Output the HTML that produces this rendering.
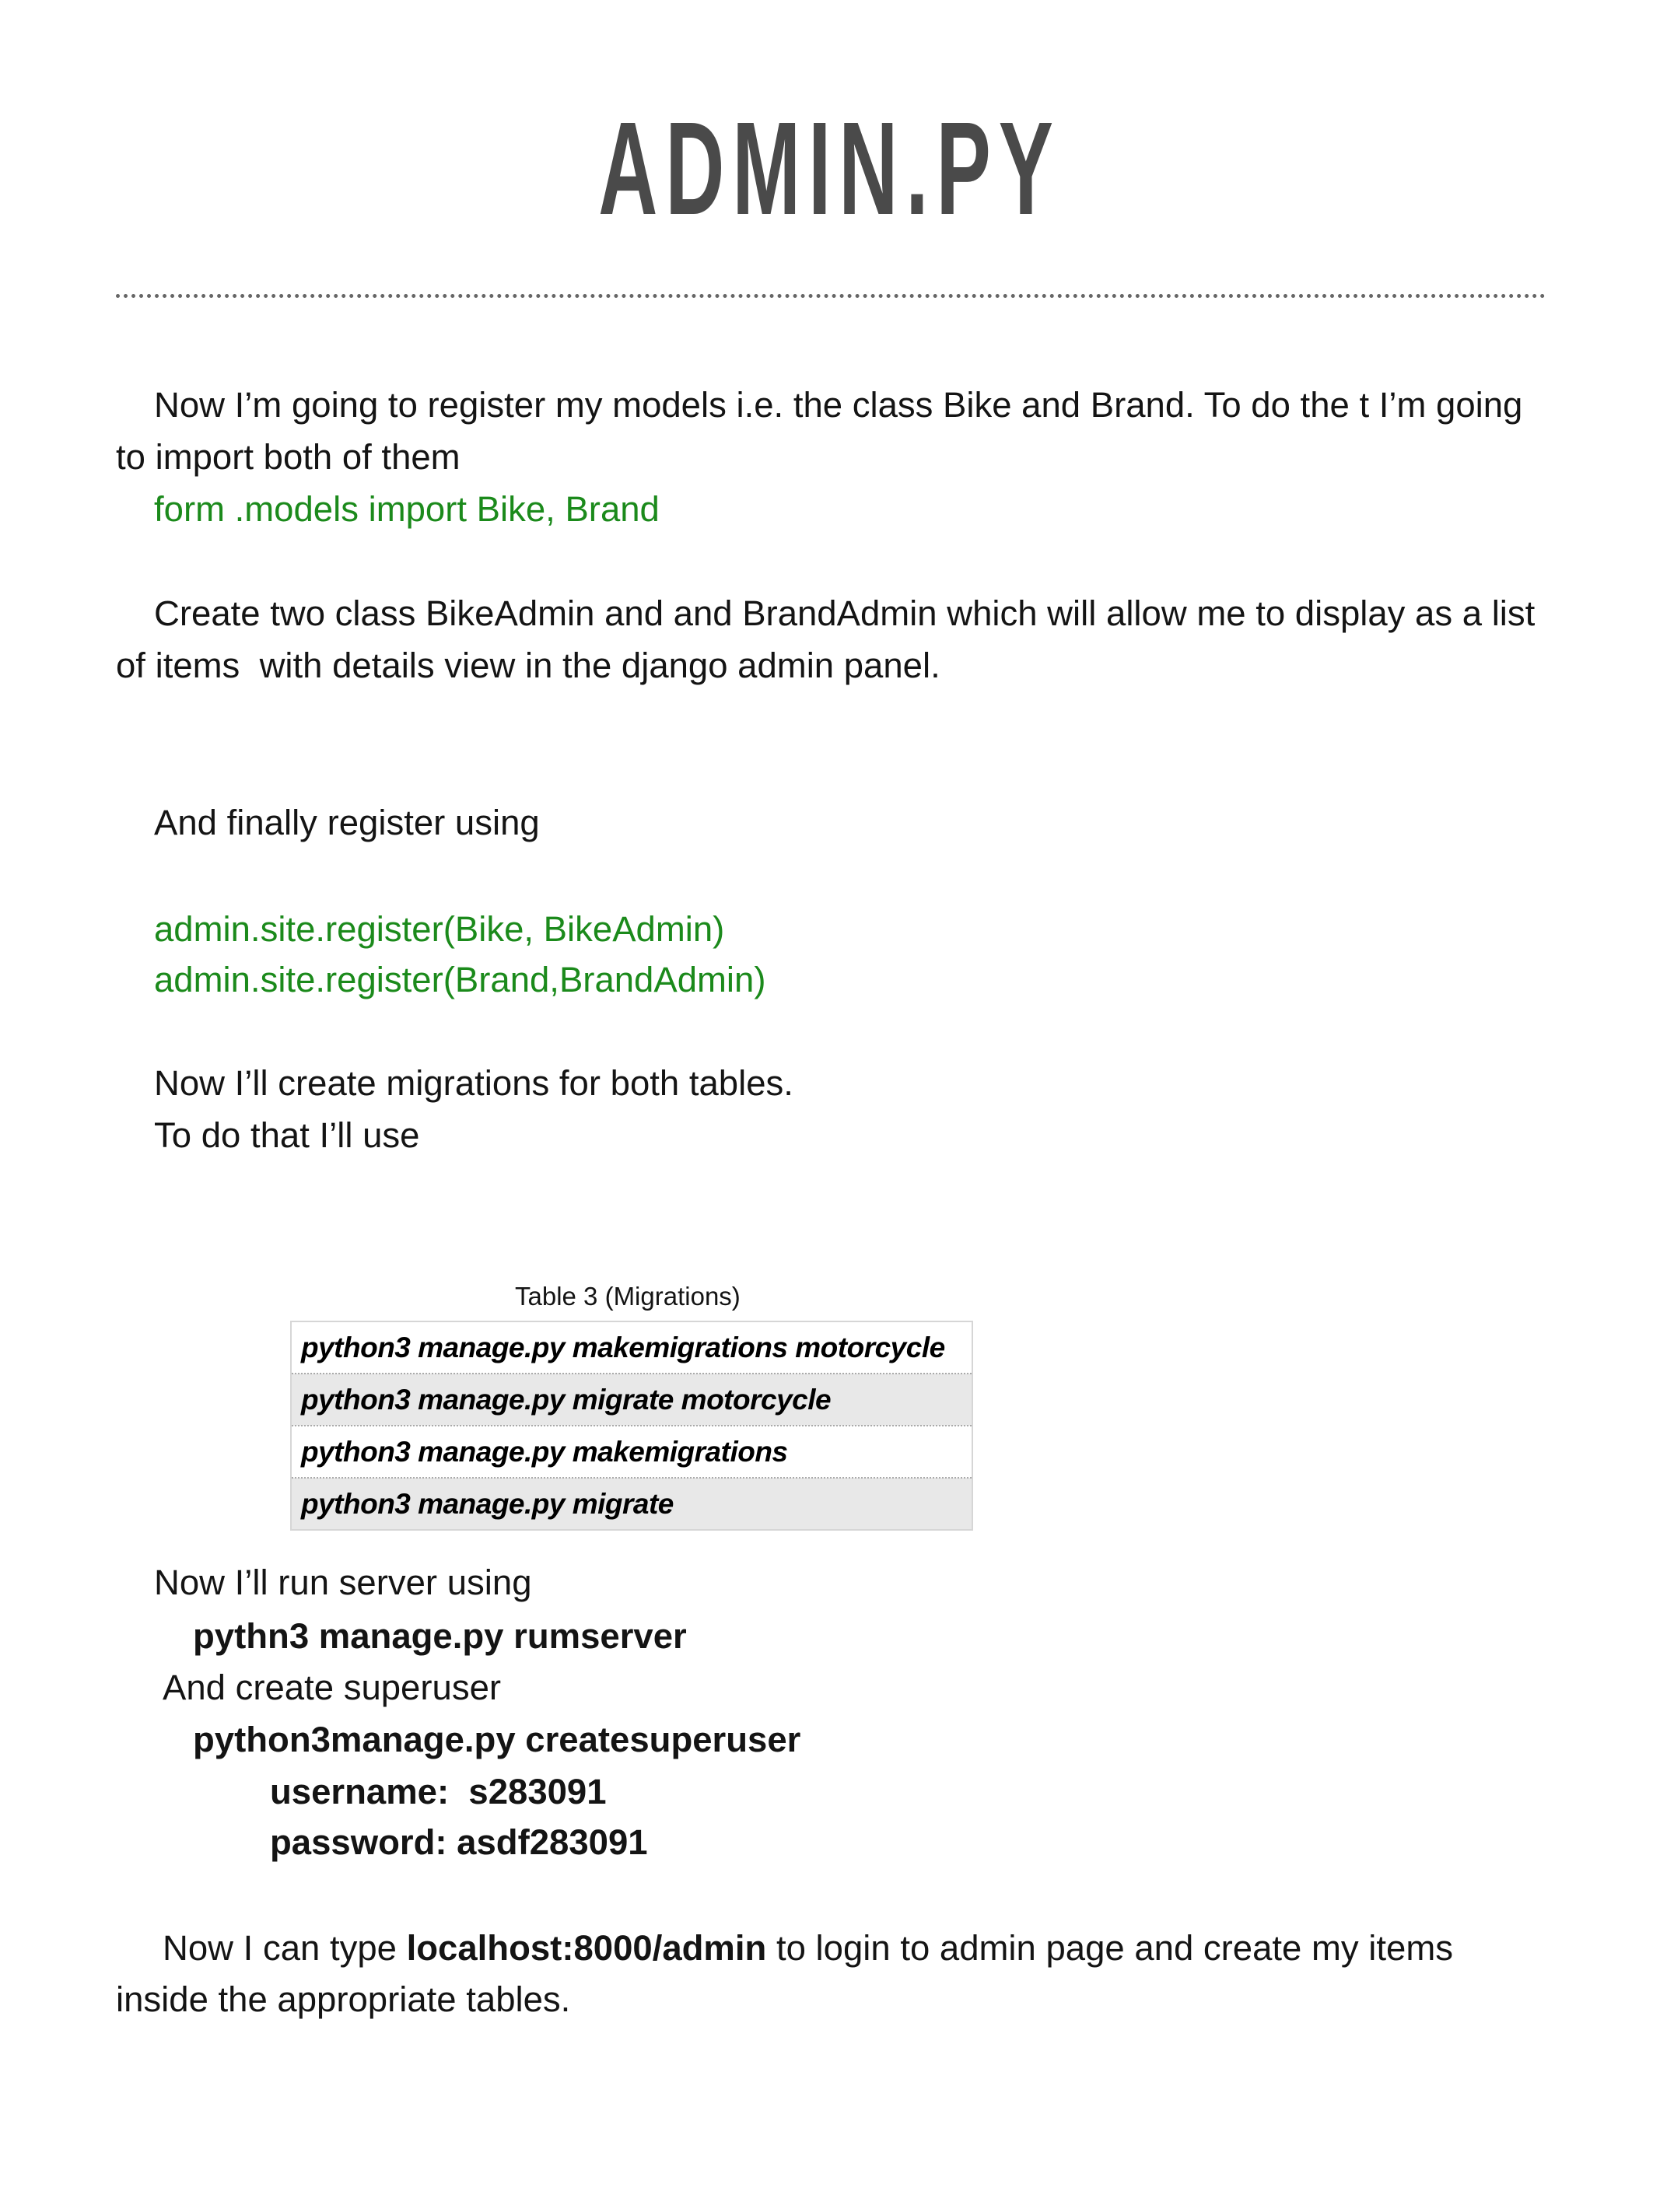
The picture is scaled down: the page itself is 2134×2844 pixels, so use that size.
<!DOCTYPE html>
<html><head><meta charset="utf-8"><style>
html,body{margin:0;padding:0;background:#fff;}
body{width:2134px;height:2844px;position:relative;overflow:hidden;font-family:"Liberation Sans",sans-serif;color:#141414;}
.l{position:absolute;white-space:nowrap;font-size:45.5px;line-height:66px;height:66px;}
.g{color:#1b8a1b;}
.b{font-weight:bold;}
.title{position:absolute;left:0;width:2134px;top:122px;text-align:center;}
.title span{display:inline-block;font-weight:bold;font-size:170px;line-height:190px;color:#4a4a4a;letter-spacing:16px;transform:scaleX(0.62);transform-origin:center;}
.dots{position:absolute;left:149px;width:1838px;top:378px;height:0;border-top:5px dotted #666;}
table{position:absolute;left:373px;top:1698px;width:878px;border-collapse:collapse;border:2px solid #d6d6d6;}
td{height:65px;padding:0 0 0 12px;font-weight:bold;font-style:italic;font-size:37px;color:#000;letter-spacing:-0.5px;}
tr+tr td{border-top:2px dotted #aaa;}
tr.s td{background:#e8e8e8;}
</style></head><body>
<div class="title"><span>ADMIN.PY</span></div>
<div class="dots"></div>
<div class="l" style="left:198px;top:488px">Now I’m going to register my models i.e. the class Bike and Brand. To do the t I’m going</div>
<div class="l" style="left:149px;top:555px">to import both of them</div>
<div class="l g" style="left:198px;top:622px">form .models import Bike, Brand</div>
<div class="l" style="left:198px;top:756px">Create two class BikeAdmin and and BrandAdmin which will allow me to display as a list</div>
<div class="l" style="left:149px;top:823px">of items&nbsp; with details view in the django admin panel.</div>
<div class="l" style="left:198px;top:1025px">And finally register using</div>
<div class="l g" style="left:198px;top:1162px">admin.site.register(Bike, BikeAdmin)</div>
<div class="l g" style="left:198px;top:1227px">admin.site.register(Brand,BrandAdmin)</div>
<div class="l" style="left:198px;top:1360px">Now I’ll create migrations for both tables.</div>
<div class="l" style="left:198px;top:1427px">To do that I’ll use</div>
<div class="l" style="left:662px;top:1634px;font-size:33px">Table 3 (Migrations)</div>
<table>
<tr><td>python3 manage.py makemigrations motorcycle</td></tr>
<tr class="s"><td>python3 manage.py migrate motorcycle</td></tr>
<tr><td>python3 manage.py makemigrations</td></tr>
<tr class="s"><td>python3 manage.py migrate</td></tr>
</table>
<div class="l" style="left:198px;top:2002px">Now I’ll run server using</div>
<div class="l b" style="left:248px;top:2071px">pythn3 manage.py rumserver</div>
<div class="l" style="left:209px;top:2137px">And create superuser</div>
<div class="l b" style="left:248px;top:2204px">python3manage.py createsuperuser</div>
<div class="l b" style="left:347px;top:2271px">username:&nbsp; s283091</div>
<div class="l b" style="left:347px;top:2336px">password: asdf283091</div>
<div class="l" style="left:209px;top:2472px">Now I can type <b>localhost:8000/admin</b> to login to admin page and create my items</div>
<div class="l" style="left:149px;top:2538px">inside the appropriate tables.</div>
</body></html>
